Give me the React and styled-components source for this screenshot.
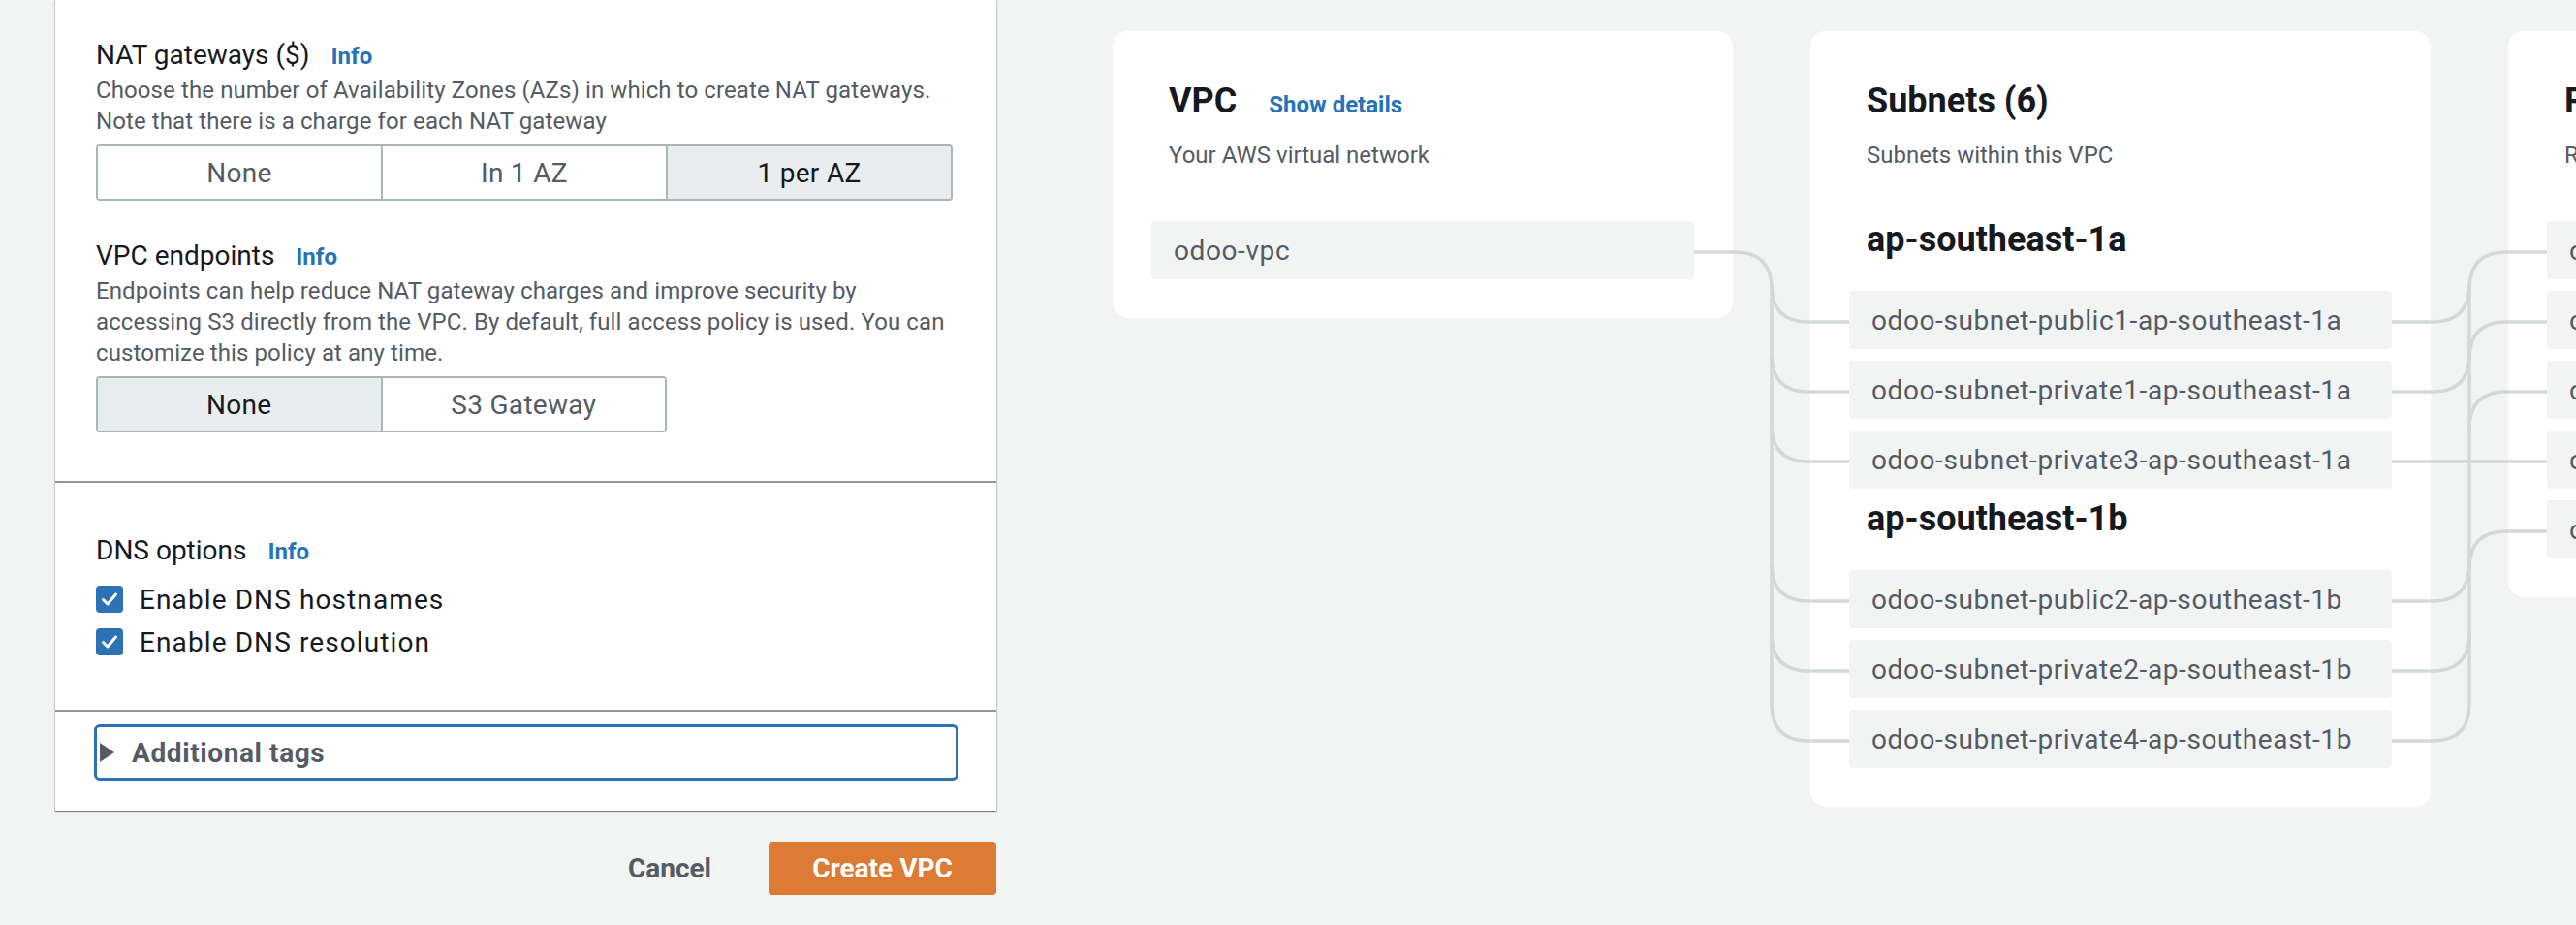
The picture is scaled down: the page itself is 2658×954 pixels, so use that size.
import React from "react";
import styled, { createGlobalStyle } from "styled-components";

const GlobalStyle = createGlobalStyle`
  html, body { margin: 0; padding: 0; background: #f2f3f3; overflow: hidden; }
  body { font-family: Roboto, "Liberation Sans", Arial, sans-serif; }
  * { box-sizing: border-box; }
`;

const Page = styled.div`
  display: flex;
  align-items: flex-start;
  width: 2658px;
  height: 954px;
  overflow: hidden;
  background: #f2f3f3;
`;

const LeftColumn = styled.div`
  margin-left: 57px;
  width: 971px;
  flex-shrink: 0;
  display: flex;
  flex-direction: column;
`;

const FormCard = styled.div`
  background: #fff;
  box-shadow: 0 1px 1px 0 rgba(0, 28, 36, 0.3), 1px 1px 1px 0 rgba(0, 28, 36, 0.15),
    -1px 1px 1px 0 rgba(0, 28, 36, 0.15);
`;

const Section = styled.div`
  padding: ${(p) => p.$pt}px 45px ${(p) => p.$pb}px ${(p) => p.$pl || 42}px;
  border-top: ${(p) => (p.$divider ? "2px solid #8f989b" : "none")};
`;

const Field = styled.div`
  & + & {
    margin-top: 37px;
  }
`;

const LabelRow = styled.div`
  display: flex;
  align-items: baseline;
  gap: 22px;
  height: 40px;
  line-height: 40px;
`;

const Label = styled.span`
  font-size: 28px;
  color: #16191f;
`;

const InfoLink = styled.a`
  font-size: 24px;
  font-weight: 700;
  color: #2673b8;
  text-decoration: none;
`;

const Description = styled.p`
  margin: 0;
  font-size: 24px;
  line-height: 32px;
  letter-spacing: 0.1px;
  color: #545b64;
`;

const Segmented = styled.div`
  display: flex;
  margin-top: 8px;
  width: ${(p) => p.$w}px;
  height: 58px;
  border: 2px solid #aab7b8;
  border-radius: 4px;
  overflow: hidden;
`;

const Segment = styled.div`
  flex: 1;
  display: flex;
  align-items: center;
  justify-content: center;
  font-size: 28px;
  letter-spacing: 0.3px;
  color: ${(p) => (p.$selected ? "#16191f" : "#545b64")};
  background: ${(p) => (p.$selected ? "#eaeded" : "#fff")};
  & + & {
    border-left: 2px solid #aab7b8;
  }
`;

const CheckList = styled.div`
  margin-top: 8px;
  display: flex;
  flex-direction: column;
`;

const CheckRow = styled.label`
  display: flex;
  align-items: center;
  gap: 17px;
  height: 44px;
  font-size: 28px;
  letter-spacing: 1.1px;
  color: #16191f;
`;

const CheckBox = styled.span`
  width: 28px;
  height: 28px;
  border-radius: 4px;
  background: #2e72b6;
  display: flex;
  align-items: center;
  justify-content: center;
  flex-shrink: 0;
`;

const TagsBox = styled.div`
  width: 892px;
  height: 58px;
  border: 3px solid #2e72b6;
  border-radius: 6px;
  display: flex;
  align-items: center;
  gap: 18px;
  padding-left: 3px;
`;

const Caret = styled.span`
  width: 0;
  height: 0;
  border-left: 15px solid #545b64;
  border-top: 10px solid transparent;
  border-bottom: 10px solid transparent;
`;

const TagsLabel = styled.span`
  font-size: 28px;
  font-weight: 700;
  letter-spacing: 0.6px;
  color: #545b64;
`;

const Actions = styled.div`
  display: flex;
  justify-content: flex-end;
  align-items: center;
  gap: 59px;
  margin-top: 32px;
`;

const CancelButton = styled.button`
  background: none;
  border: none;
  padding: 0;
  font-family: inherit;
  font-size: 28px;
  font-weight: 700;
  color: #545b64;
`;

const PrimaryButton = styled.button`
  width: 235px;
  height: 55px;
  border: none;
  border-radius: 4px;
  background: #dd7a34;
  color: #fff;
  font-family: inherit;
  font-size: 28px;
  font-weight: 700;
`;

const Diagram = styled.div`
  position: relative;
  margin-left: 120px;
  padding-top: 32px;
  display: flex;
  align-items: flex-start;
  gap: 80px;
  flex-shrink: 0;
`;

const DiagramCard = styled.div`
  width: 640px;
  flex-shrink: 0;
  background: #fff;
  border-radius: 16px;
  padding: 48px 40px 40px;
`;

const CardHeader = styled.div`
  padding-left: 18px;
`;

const TitleRow = styled.div`
  display: flex;
  align-items: baseline;
  gap: 33px;
  height: 48px;
`;

const Title = styled.h2`
  margin: 0;
  font-size: 36px;
  line-height: 48px;
  font-weight: 700;
  color: #16191f;
  white-space: nowrap;
`;

const DetailsLink = styled.a`
  font-size: 24px;
  font-weight: 700;
  color: #2673b8;
  text-decoration: none;
`;

const Subtitle = styled.div`
  margin-top: 16px;
  font-size: 24px;
  line-height: 32px;
  color: #545b64;
  white-space: nowrap;
`;

const CardBody = styled.div`
  margin-top: 52px;
  display: flex;
  flex-direction: column;
  gap: 12px;
`;

const GroupHeading = styled.h3`
  margin: 0 0 0 18px;
  height: 60px;
  font-size: 36px;
  line-height: 38px;
  font-weight: 700;
  color: #16191f;
  white-space: nowrap;
`;

const ResourceBox = styled.div`
  height: 60px;
  background: #f2f3f3;
  border-radius: 4px;
  padding-left: 23px;
  display: flex;
  align-items: center;
  font-size: 28px;
  letter-spacing: 0.6px;
  color: #545b64;
  white-space: nowrap;
  overflow: hidden;
`;

const Connectors = styled.svg`
  position: absolute;
  left: 0;
  top: 0;
  width: 1600px;
  height: 954px;
  pointer-events: none;
  overflow: visible;
`;

const subnetGroups = [
  {
    az: "ap-southeast-1a",
    items: [
      "odoo-subnet-public1-ap-southeast-1a",
      "odoo-subnet-private1-ap-southeast-1a",
      "odoo-subnet-private3-ap-southeast-1a",
    ],
  },
  {
    az: "ap-southeast-1b",
    items: [
      "odoo-subnet-public2-ap-southeast-1b",
      "odoo-subnet-private2-ap-southeast-1b",
      "odoo-subnet-private4-ap-southeast-1b",
    ],
  },
];

const routeTables = [
  "odoo-rtb-public",
  "odoo-rtb-private1-ap-southeast-1a",
  "odoo-rtb-private2-ap-southeast-1b",
  "odoo-rtb-private3-ap-southeast-1a",
  "odoo-rtb-private4-ap-southeast-1b",
];

function CheckMark() {
  return (
    <svg width="20" height="20" viewBox="0 0 20 20">
      <path d="M3.5 10.5 L8 15 L16.5 5" fill="none" stroke="#fff" strokeWidth="3" strokeLinecap="round" strokeLinejoin="round" />
    </svg>
  );
}

function ConnectorLines() {
  const r = 38;
  const subnetYs = [332, 404, 476, 620, 692, 764];
  const rtYs = [260, 332, 404, 476, 548];
  const lb = 680;
  const rb = 1400;
  const paths = [];
  paths.push(`M600 260 H${lb - r} Q${lb} 260 ${lb} ${260 + r} V${764 - r}`);
  subnetYs.forEach((y) => {
    paths.push(`M${lb} ${y - r} Q${lb} ${y} ${lb + r} ${y} H760`);
  });
  [0, 1, 3, 4, 5].forEach((i) => {
    const y = subnetYs[i];
    paths.push(`M1320 ${y} H${rb - r} Q${rb} ${y} ${rb} ${y - r}`);
  });
  [0, 1, 2, 4].forEach((i) => {
    const y = rtYs[i];
    paths.push(`M${rb} ${y + r} Q${rb} ${y} ${rb + r} ${y} H1480`);
  });
  paths.push(`M${rb} ${260 + r} V${764 - r}`);
  paths.push(`M1320 476 H1480`);
  return (
    <Connectors viewBox="0 0 1600 954">
      {paths.map((d, i) => (
        <path key={i} d={d} fill="none" stroke="#d3d9da" strokeWidth="3.5" />
      ))}
    </Connectors>
  );
}

export default function App() {
  return (
    <>
      <GlobalStyle />
      <Page>
        <LeftColumn>
          <FormCard>
            <Section $pt={37} $pb={50}>
              <Field>
                <LabelRow>
                  <Label>NAT gateways ($)</Label>
                  <InfoLink>Info</InfoLink>
                </LabelRow>
                <Description>
                  Choose the number of Availability Zones (AZs) in which to create NAT gateways.
                  <br />
                  Note that there is a charge for each NAT gateway
                </Description>
                <Segmented $w={884}>
                  <Segment>None</Segment>
                  <Segment>In 1 AZ</Segment>
                  <Segment $selected>1 per AZ</Segment>
                </Segmented>
              </Field>
              <Field>
                <LabelRow>
                  <Label>VPC endpoints</Label>
                  <InfoLink>Info</InfoLink>
                </LabelRow>
                <Description>
                  Endpoints can help reduce NAT gateway charges and improve security by
                  <br />
                  accessing S3 directly from the VPC. By default, full access policy is used. You can
                  <br />
                  customize this policy at any time.
                </Description>
                <Segmented $w={589}>
                  <Segment $selected>None</Segment>
                  <Segment>S3 Gateway</Segment>
                </Segmented>
              </Field>
            </Section>
            <Section $divider $pt={50} $pb={48}>
              <LabelRow>
                <Label>DNS options</Label>
                <InfoLink>Info</InfoLink>
              </LabelRow>
              <CheckList>
                <CheckRow>
                  <CheckBox>
                    <CheckMark />
                  </CheckBox>
                  Enable DNS hostnames
                </CheckRow>
                <CheckRow>
                  <CheckBox>
                    <CheckMark />
                  </CheckBox>
                  Enable DNS resolution
                </CheckRow>
              </CheckList>
            </Section>
            <Section $divider $pt={13} $pb={31} $pl={40}>
              <TagsBox>
                <Caret />
                <TagsLabel>Additional tags</TagsLabel>
              </TagsBox>
            </Section>
          </FormCard>
          <Actions>
            <CancelButton>Cancel</CancelButton>
            <PrimaryButton>Create VPC</PrimaryButton>
          </Actions>
        </LeftColumn>

        <Diagram>
          <DiagramCard>
            <CardHeader>
              <TitleRow>
                <Title>VPC</Title>
                <DetailsLink>Show details</DetailsLink>
              </TitleRow>
              <Subtitle>Your AWS virtual network</Subtitle>
            </CardHeader>
            <CardBody>
              <ResourceBox>odoo-vpc</ResourceBox>
            </CardBody>
          </DiagramCard>

          <DiagramCard>
            <CardHeader>
              <TitleRow>
                <Title>Subnets (6)</Title>
              </TitleRow>
              <Subtitle>Subnets within this VPC</Subtitle>
            </CardHeader>
            <CardBody>
              {subnetGroups.map((g) => (
                <React.Fragment key={g.az}>
                  <GroupHeading>{g.az}</GroupHeading>
                  {g.items.map((s) => (
                    <ResourceBox key={s}>{s}</ResourceBox>
                  ))}
                </React.Fragment>
              ))}
            </CardBody>
          </DiagramCard>

          <DiagramCard>
            <CardHeader>
              <TitleRow>
                <Title>Route tables (5)</Title>
              </TitleRow>
              <Subtitle>Route network traffic to resources</Subtitle>
            </CardHeader>
            <CardBody>
              {routeTables.map((r) => (
                <ResourceBox key={r}>{r}</ResourceBox>
              ))}
            </CardBody>
          </DiagramCard>

          <ConnectorLines />
        </Diagram>
      </Page>
    </>
  );
}
